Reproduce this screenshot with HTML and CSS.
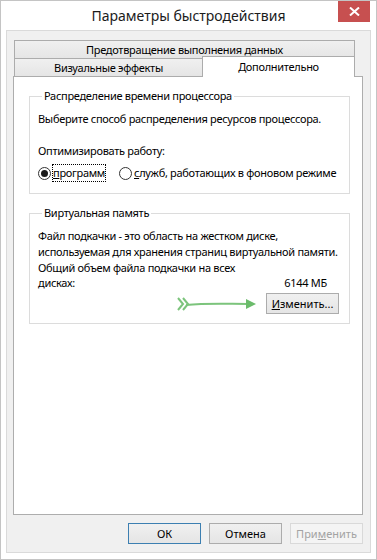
FILE: index.html
```html
<!DOCTYPE html>
<html lang="ru">
  <head>
    <meta charset="UTF-8" />
    <title>Параметры быстродействия</title>
    <link rel="stylesheet" href="styles.css">
  </head>
  <body>
    <div class="window">
      <div class="titlebar">
        <span class="title">Параметры быстродействия</span>
        <div class="close">
          <svg width="11" height="9" viewBox="0 0 11 9">
            <path d="M1 0.5 L10 8.5 M10 0.5 L1 8.5" stroke="#fff" stroke-width="2" />
          </svg>
        </div>
      </div>
      <div class="client">
        <div class="tabs">
          <div class="tab-row">
            <div class="tab tab-wide">Предотвращение выполнения данных</div>
          </div>
          <div class="tab-row">
            <div class="tab tab-visual">Визуальные эффекты</div>
            <div class="tab tab-active">Дополнительно</div>
          </div>
        </div>
        <div class="panel">
          <fieldset class="group group-cpu">
            <legend>Распределение времени процессора</legend>
            <p class="first">Выберите способ распределения ресурсов процессора.</p>
            <p class="gap">Оптимизировать работу:</p>
            <div class="radios">
              <label class="radio">
                <span class="circle checked"></span>
                <span class="focus"><u>п</u>рограмм</span>
              </label>
              <label class="radio">
                <span class="circle"></span>
                <span><u>с</u>лужб, работающих в фоновом режиме</span>
              </label>
            </div>
          </fieldset>
          <fieldset class="group group-mem">
            <legend>Виртуальная память</legend>
            <p class="first">Файл подкачки - это область на жестком диске,<br>используемая для хранения страниц виртуальной памяти.</p>
            <div class="total">
              <p>Общий объем файла подкачки на всех<br>дисках:</p>
              <span class="size">6144 МБ</span>
            </div>
            <div class="change-row">
              <svg class="arrow" width="80" height="16" viewBox="0 0 80 16">
                <path d="M1 2 L6 8 L1 14 M6 2 L11 8 L6 14" fill="none" stroke="#7cc47c" stroke-width="2" />
                <path d="M9 9 C 30 7, 50 8, 71 8" fill="none" stroke="#7cc47c" stroke-width="2" />
                <path d="M69 3 L79 8 L69 13 Z" fill="#6bbb6b" />
              </svg>
              <button class="btn"><u>И</u>зменить...</button>
            </div>
          </fieldset>
        </div>
        <div class="buttons">
          <button class="btn btn-default">ОК</button>
          <button class="btn">Отмена</button>
          <button class="btn btn-disabled">При<u>м</u>енить</button>
        </div>
      </div>
    </div>
  </body>
</html>
```

FILE: styles.css
```css
* {
  margin: 0;
  padding: 0;
  box-sizing: border-box;
}
body {
  font-family: "Noto Sans", "Open Sans", sans-serif;
  font-size: 11px;
  letter-spacing: -0.3px;
  line-height: 16px;
  color: #000;
  background: #fff;
}
.window {
  position: relative;
  width: 377px;
  height: 560px;
  border: 1px solid #c4c4c4;
  background: #fff;
}
.titlebar {
  height: 29px;
  text-align: center;
}
.title {
  display: inline-block;
  font-size: 14px;
  letter-spacing: 0;
  line-height: 29px;
  color: #1b1b1b;
}
.close {
  position: absolute;
  top: 0;
  right: 6px;
  width: 32px;
  height: 21px;
  background: #c75050;
  display: flex;
  align-items: center;
  justify-content: center;
}
.client {
  margin: 0 5px;
  height: 523px;
  border: 1px solid #dadada;
  background: #f0f0f0;
  padding: 9px 7px 0 6px;
}
.tabs {
  padding: 0 8px 0 1px;
}
.tab-row {
  display: flex;
  height: 18px;
}
.tab {
  height: 19px;
  border: 1px solid #acacac;
  background: linear-gradient(#f0f0f0, #e5e5e5);
  text-align: center;
  line-height: 17px;
}
.tab-wide {
  flex: 1;
}
.tab-visual {
  width: 188px;
  border-right: none;
}
.tab-active {
  flex: 1;
  height: 21px;
  margin-top: -2px;
  background: #fff;
  border-bottom: none;
  position: relative;
  z-index: 1;
  line-height: 19px;
}
.panel {
  height: 439px;
  border: 1px solid #adadad;
  background: #fff;
  padding: 0 12px 0 15px;
}
.group {
  border: 1px solid #dcdcdc;
  padding: 0 8px;
  white-space: nowrap;
}
.group legend {
  margin-left: 4px;
  padding: 0 2px;
}
.group-cpu {
  margin-top: 11px;
  padding-bottom: 12px;
}
.group-mem {
  margin-top: 11px;
  padding-bottom: 9px;
}
.first {
  margin-top: 7px;
}
.gap {
  margin-top: 16px;
}
.radios {
  display: flex;
  margin-top: 6px;
  gap: 14px;
}
.radio {
  display: flex;
  align-items: center;
  gap: 2px;
}
.circle {
  width: 13px;
  height: 13px;
  border: 1px solid #333;
  border-radius: 50%;
  background: #fff;
  display: flex;
  align-items: center;
  justify-content: center;
}
.circle.checked::after {
  content: "";
  width: 7px;
  height: 7px;
  border-radius: 50%;
  background: #1a1a1a;
}
.focus {
  outline: 1px dotted #000;
  outline-offset: 0;
}
.total {
  display: flex;
  align-items: flex-end;
  justify-content: space-between;
  line-height: 15px;
  padding-right: 14px;
}
.change-row {
  display: flex;
  justify-content: flex-end;
  align-items: center;
  margin-top: 3px;
  padding-right: 2px;
  gap: 9px;
}
.btn {
  font: inherit;
  color: #000;
  width: 73px;
  height: 21px;
  border: 1px solid #acacac;
  background: linear-gradient(#f0f0f0, #e5e5e5);
}
.buttons {
  display: flex;
  justify-content: flex-end;
  gap: 8px;
  margin-top: 8px;
}
.btn-default {
  border-color: #3c7fb1;
}
.btn-disabled {
  color: #a3a3a3;
  border-color: #d9d9d9;
  background: #f4f4f4;
}
```
